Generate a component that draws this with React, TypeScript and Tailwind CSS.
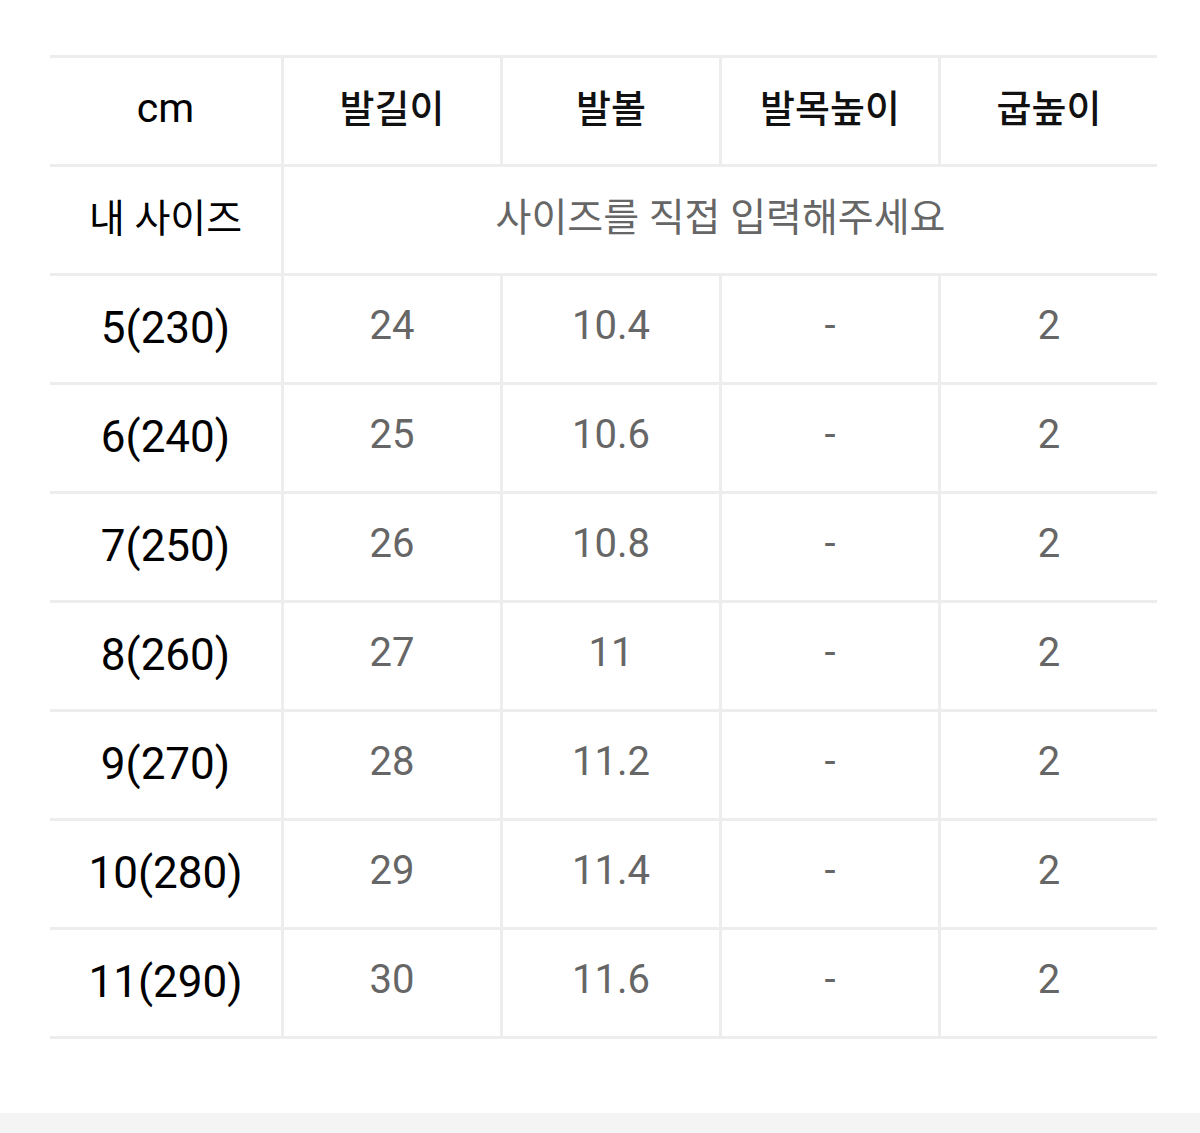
import React from "react";

const rows = [
  ["5(230)", "24", "10.4", "-", "2"],
  ["6(240)", "25", "10.6", "-", "2"],
  ["7(250)", "26", "10.8", "-", "2"],
  ["8(260)", "27", "11", "-", "2"],
  ["9(270)", "28", "11.2", "-", "2"],
  ["10(280)", "29", "11.4", "-", "2"],
  ["11(290)", "30", "11.6", "-", "2"],
];

export default function App() {
  return (
    <div className="w-[1200px] h-[1133px] bg-white flex flex-col font-['Roboto','Noto_Sans_CJK_KR',sans-serif]">
      <div className="pt-[55px] pl-[50px] flex-1">
        <div className="w-[1107px] border-y-[3px] border-[#ededed] bg-[#ededed] grid grid-cols-[231px_216px_216px_216px_216px] auto-rows-[106px] gap-[3px]">
          <div className="bg-white flex items-center justify-center text-[41px] font-normal text-black pb-[4px]">
            cm
          </div>
          {["발길이", "발볼", "발목높이", "굽높이"].map((h) => (
            <div
              key={h}
              className="bg-white flex items-center justify-center text-[38px] font-medium text-[#111] pb-[4px]"
            >
              {h}
            </div>
          ))}
          <div className="bg-white flex items-center justify-center text-[39px] font-normal text-black pb-[2px]">
            내 사이즈
          </div>
          <div className="col-span-4 bg-white flex items-center justify-center text-[39px] text-[#666] pb-[4px]">
            사이즈를 직접 입력해주세요
          </div>
          {rows.map((r) => (
            <React.Fragment key={r[0]}>
              <div className="bg-white flex items-center justify-center text-[44px] font-normal text-black pb-[2px]">
                {r[0]}
              </div>
              {r.slice(1).map((v, i) => (
                <div
                  key={i}
                  className="bg-white flex items-center justify-center text-[40px] text-[#666] pb-[6px]"
                >
                  {v}
                </div>
              ))}
            </React.Fragment>
          ))}
        </div>
      </div>
      <div className="h-[20px] bg-[#f4f4f4]" />
    </div>
  );
}
